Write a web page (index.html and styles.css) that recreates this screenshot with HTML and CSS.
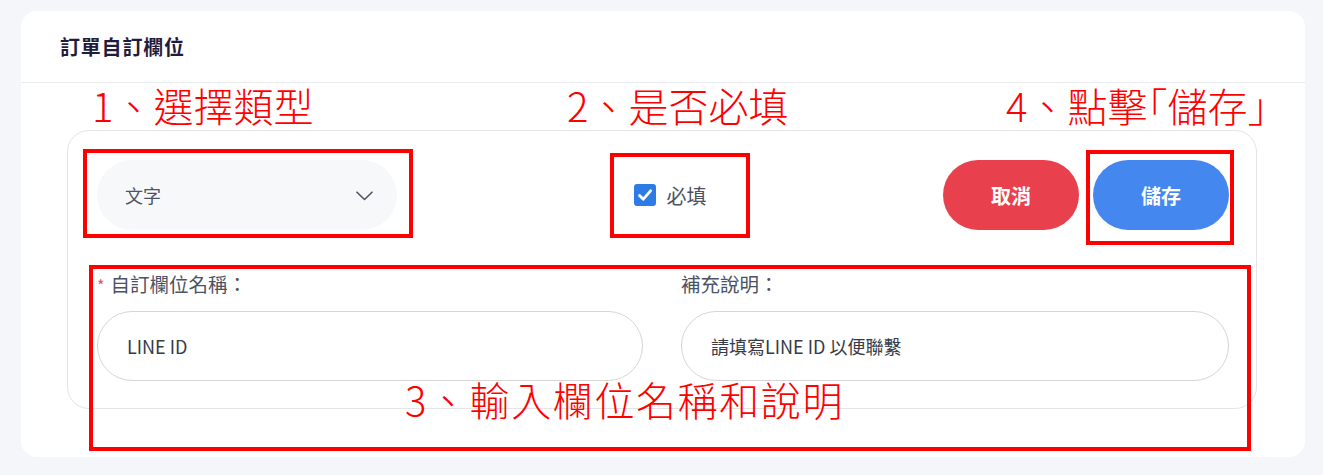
FILE: index.html
```html
<!DOCTYPE html>
<html lang="zh-Hant">
<head>
  <meta charset="UTF-8">
  <meta name="viewport" content="width=device-width, initial-scale=1.0">
  <title>訂單自訂欄位</title>
  <link rel="stylesheet" href="styles.css">
</head>
<body>
  <div class="card">
    <div class="card-head">訂單自訂欄位</div>
    <div class="card-body">
      <div class="field-box">
        <div class="top-row">
          <div class="select">
            <span>文字</span>
            <svg class="chevron" width="17" height="10" viewBox="0 0 17 10"><path d="M1 1.2 L8.5 8.5 L16 1.2" fill="none" stroke="#4b5563" stroke-width="1.6" stroke-linecap="round" stroke-linejoin="round"/></svg>
          </div>
          <label class="check">
            <span class="box">
              <svg width="22" height="22" viewBox="0 0 22 22"><path d="M5.5 11.5 L9.3 15.2 L16.6 6.8" fill="none" stroke="#fff" stroke-width="2.8" stroke-linecap="round" stroke-linejoin="round"/></svg>
            </span>
            必填
          </label>
          <div class="actions">
            <button class="btn cancel">取消</button>
            <button class="btn save">儲存</button>
          </div>
        </div>
        <div class="inputs">
          <div class="group">
            <div class="label"><span class="req">*</span>自訂欄位名稱：</div>
            <div class="input">LINE ID</div>
          </div>
          <div class="group">
            <div class="label">補充說明：</div>
            <div class="input">請填寫LINE ID 以便聯繫</div>
          </div>
        </div>
      </div>
    </div>
  </div>

  <!-- annotations drawn over the screenshot -->
  <div class="note note1">1、選擇類型</div>
  <div class="note note2">2、是否必填</div>
  <div class="note note4">4、點擊<span class="half">「</span>儲存<span class="half">」</span></div>
  <div class="note note3">3、輸入欄位名稱和說明</div>
  <div class="mark mark1"></div>
  <div class="mark mark2"></div>
  <div class="mark mark3"></div>
  <div class="mark mark4"></div>
</body>
</html>
```

FILE: styles.css
```css
*{
  margin: 0;
  padding: 0;
  box-sizing: border-box;
}
body{
  font-family: "Noto Sans CJK TC", "Noto Sans", sans-serif;
  background-color: #f5f6fa;
  width: 1323px;
  height: 475px;
  position: relative;
  overflow: hidden;
}
.card{
  margin: 11px 18px 0 21px;
  height: 446px;
  background-color: #fff;
  border-radius: 16px;
}
.card-head{
  height: 72px;
  padding-left: 39px;
  display: flex;
  align-items: center;
  font-size: 20px;
  font-weight: 700;
  letter-spacing: 0.8px;
  color: #1f1c3e;
  border-bottom: 1px solid #ebebef;
}
.card-body{
  padding: 47px 48px 0 46px;
}
.field-box{
  border: 1px solid #e4e4e4;
  border-radius: 22px;
  padding: 29px 27px 27px 29px;
}
.top-row{
  display: flex;
  justify-content: space-between;
  align-items: center;
}
.select{
  width: 300px;
  height: 70px;
  border-radius: 35px;
  background-color: #f7f8fa;
  display: flex;
  align-items: center;
  justify-content: space-between;
  padding: 0 24px 0 28px;
  font-size: 18px;
  color: #4b5563;
}
.chevron{
  margin-top: 2px;
}
.check{
  display: flex;
  align-items: center;
  gap: 11px;
  font-size: 20px;
  color: #4b5263;
}
.box{
  width: 22px;
  height: 22px;
  border-radius: 3px;
  background-color: #2f7be6;
  display: flex;
}
.actions{
  display: flex;
  gap: 14px;
}
.btn{
  width: 136px;
  height: 70px;
  border: none;
  border-radius: 35px;
  font-family: inherit;
  font-size: 20px;
  font-weight: 700;
  color: #fff;
}
.cancel{
  background-color: #e8414d;
}
.save{
  background-color: #4487ee;
}
.inputs{
  display: grid;
  grid-template-columns: 546px 548px;
  gap: 38px;
  margin-top: 40px;
}
.label{
  font-size: 19.5px;
  line-height: 28px;
  color: #4b5263;
  margin-bottom: 13px;
}
.req{
  color: #e05562;
  font-size: 16px;
  vertical-align: top;
  margin-right: 6px;
  position: relative;
  top: 1px;
}
.input{
  height: 70px;
  border: 1px solid #d6d6d6;
  border-radius: 35px;
  display: flex;
  align-items: center;
  padding-left: 29px;
  font-size: 18px;
  color: #353b48;
}
.note{
  position: absolute;
  font-size: 40px;
  font-weight: 300;
  line-height: 40px;
  color: #ff0000;
  white-space: nowrap;
}
.half{
  font-feature-settings: "halt";
}
.note1{ left: 92px; top: 85px; }
.note2{ left: 567px; top: 85px; }
.note4{ left: 1006px; top: 85px; }
.note3{ left: 405px; top: 379px; letter-spacing: 1.6px; }
.mark{
  position: absolute;
  border: 4px solid #ff0000;
}
.mark1{ left: 83px; top: 149px; width: 330px; height: 89px; }
.mark2{ left: 610px; top: 153px; width: 140px; height: 85px; }
.mark3{ left: 1086px; top: 150px; width: 148px; height: 95px; }
.mark4{ left: 89px; top: 265px; width: 1162px; height: 186px; }
```
